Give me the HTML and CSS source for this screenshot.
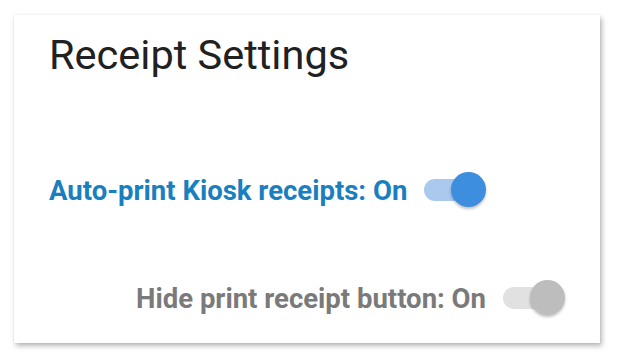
FILE: index.html
```html
<!DOCTYPE html>
<html>
<head>
<meta charset="utf-8">
<link rel="stylesheet" href="styles.css">
</head>
<body>
<div class="card">
  <h1 class="title">Receipt Settings</h1>
  <div class="row row-primary">
    <span class="label label-blue">Auto-print Kiosk receipts: On</span>
    <span class="toggle toggle-blue"><span class="track"></span><span class="thumb"></span></span>
  </div>
  <div class="row row-secondary">
    <span class="label label-gray">Hide print receipt button: On</span>
    <span class="toggle toggle-gray"><span class="track"></span><span class="thumb"></span></span>
  </div>
</div>
</body>
</html>
```

FILE: styles.css
```css
html, body {
  margin: 0;
  padding: 0;
  background: #ffffff;
}
body {
  box-sizing: border-box;
  min-height: 362px;
  padding: 15px 0 19px 14px;
  font-family: Roboto, "Liberation Sans", sans-serif;
}
.card {
  box-sizing: border-box;
  width: 586px;
  height: 328px;
  background: #ffffff;
  box-shadow: 2px 3px 5px rgba(0, 0, 0, 0.28), 0 0 2px rgba(0, 0, 0, 0.08);
  padding: 16px 0 0 35px;
  display: flex;
  flex-direction: column;
}
.title {
  margin: 0;
  font-size: 41.5px;
  font-weight: 400;
  line-height: 48px;
  color: #212121;
}
.row {
  display: flex;
  align-items: center;
  gap: 17px;
  height: 36px;
}
.row-primary {
  margin-top: 93px;
}
.row-secondary {
  margin-top: 72px;
  align-self: flex-end;
  margin-right: 35px;
}
.label {
  font-size: 27.5px;
  font-weight: 700;
}
.label-blue { color: #1a7fbe; }
.label-gray { color: #7a7a7a; }
.toggle {
  position: relative;
  width: 62px;
  height: 36px;
  flex: none;
}
.track {
  position: absolute;
  left: 0;
  top: 7px;
  width: 58px;
  height: 22px;
  border-radius: 11px;
}
.thumb {
  position: absolute;
  right: 0;
  top: 0;
  width: 35px;
  height: 35px;
  border-radius: 50%;
  box-shadow: 0 2px 3px rgba(0, 0, 0, 0.25);
}
.toggle-blue .track { background: #a9c9ef; }
.toggle-blue .thumb { background: #3e8ee0; }
.toggle-gray .track { background: #e1e1e1; }
.toggle-gray .thumb { background: #bdbdbd; }
```
